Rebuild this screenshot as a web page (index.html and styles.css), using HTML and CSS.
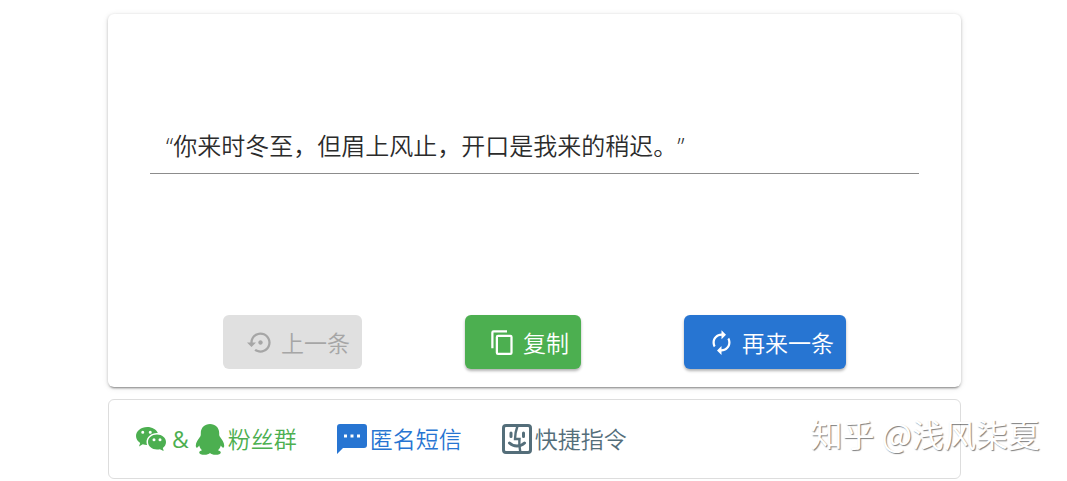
FILE: index.html
```html
<!DOCTYPE html>
<html lang="zh-CN">
<head>
<meta charset="utf-8">
<meta name="viewport" content="width=device-width, initial-scale=1">
<title>一言</title>
<link rel="stylesheet" href="styles.css">
</head>
<body>
<main class="page">
  <section class="card">
    <div class="field">
      <input class="quote" type="text" readonly aria-label="句子" value="“你来时冬至，但眉上风止，开口是我来的稍迟。”">
    </div>
    <div class="actions">
      <button class="btn btn-disabled" type="button" disabled>
        <svg class="btn-icon" viewBox="0 0 24 24" aria-hidden="true"><path d="M14 12c0-1.1-.9-2-2-2s-2 .9-2 2 .9 2 2 2 2-.9 2-2zm-2-9c-4.97 0-9 4.03-9 9H0l4 4 4-4H5c0-3.87 3.13-7 7-7s7 3.13 7 7-3.13 7-7 7c-1.51 0-2.91-.49-4.06-1.3l-1.42 1.44C8.04 20.3 9.94 21 12 21c4.97 0 9-4.03 9-9s-4.03-9-9-9z"/></svg>
        <span>上一条</span>
      </button>
      <button class="btn btn-green" type="button">
        <svg class="btn-icon" viewBox="0 0 24 24" aria-hidden="true"><path d="M19 21H8V7h11m0-2H8a2 2 0 0 0-2 2v14a2 2 0 0 0 2 2h11a2 2 0 0 0 2-2V7a2 2 0 0 0-2-2m-3-4H4a2 2 0 0 0-2 2v14h2V3h12V1z"/></svg>
        <span>复制</span>
      </button>
      <button class="btn btn-blue" type="button">
        <svg class="btn-icon" viewBox="0 0 24 24" aria-hidden="true"><path d="M12 6v3l4-4-4-4v3c-4.42 0-8 3.58-8 8 0 1.57.46 3.03 1.24 4.26L6.7 14.8c-.45-.83-.7-1.79-.7-2.8 0-3.31 2.69-6 6-6zm6.76 1.74L17.3 9.2c.44.84.7 1.79.7 2.8 0 3.31-2.69 6-6 6v-3l-4 4 4 4v-3c4.42 0 8-3.58 8-8 0-1.57-.46-3.03-1.24-4.26z"/></svg>
        <span>再来一条</span>
      </button>
    </div>
  </section>
  <nav class="links">
    <a class="link link-green" href="#group">
      <svg class="link-icon" viewBox="0 0 24 24" aria-hidden="true"><path d="M9.5 4C5.36 4 2 6.69 2 10c0 1.89 1.08 3.56 2.78 4.66L4 17l2.5-1.5c.89.31 1.87.5 2.91.5A5.22 5.22 0 0 1 9 14c0-3.31 3.13-6 7-6 .19 0 .38 0 .56.03C15.54 5.69 12.78 4 9.5 4m-3 2.5a1 1 0 1 1 0 2 1 1 0 0 1 0-2m5 0a1 1 0 1 1 0 2 1 1 0 0 1 0-2M16 9c-3.31 0-6 2.24-6 5s2.69 5 6 5c.67 0 1.31-.08 1.91-.25L20.5 20l-.62-2C21.17 17.1 22 15.65 22 14c0-2.76-2.69-5-6-5m-2 2.5a1 1 0 1 1 0 2 1 1 0 0 1 0-2m4 0a1 1 0 1 1 0 2 1 1 0 0 1 0-2z" transform="translate(-2.4 -2.4) scale(1.2)"/></svg>
      <span class="amp">&amp;</span>
      <svg class="link-icon" viewBox="0 0 30 32" aria-hidden="true"><path d="M15 1C9.7 1 5.8 4.8 5.8 10c0 1.300.1 2.200-.4 3.200C3 16.500.8 19.500.8 22.500c0 1.500.5 2.200 1 2.200.8 0 1.700-1.300 2.400-2.300.6 2 1.500 3.500 2.800 4.800-1.700.5-2.800 1.300-2.800 2.300 0 1.500 2.300 2.300 5.300 2.300 2.400 0 4.500-.7 5.500-1.800 1 1.100 3.100 1.800 5.500 1.800 3 0 5.300-.8 5.300-2.300 0-1-1.100-1.800-2.800-2.300 1.300-1.300 2.200-2.800 2.800-4.800.7 1 1.600 2.300 2.400 2.300.5 0 1-.7 1-2.200 0-3-2.200-6-4.600-9.300-.5-1-.4-1.900-.4-3.200C24.200 4.800 20.300 1 15 1z"/></svg>
      <span>粉丝群</span>
    </a>
    <a class="link link-blue" href="#message">
      <svg class="link-icon" viewBox="0 0 30 30" aria-hidden="true"><path fill-rule="evenodd" d="M3 0h24a3 3 0 0 1 3 3v18a3 3 0 0 1-3 3H6l-6 6V3a3 3 0 0 1 3-3zm4 10.500v3h3v-3zm6.500 0v3h3v-3zm6.500 0v3h3v-3z"/></svg>
      <span>匿名短信</span>
    </a>
    <a class="link link-slate" href="#shortcut">
      <svg class="link-icon" viewBox="0 0 30 30" aria-hidden="true"><g fill="none" stroke="currentColor" stroke-width="3"><rect x="1.500" y="1.500" width="27" height="27" rx="2.500"/><path stroke-width="2.400" d="M15.500 2c-1.500 4-2.500 8-2.500 13h4.500c-.5 4 0 8 .8 13"/><path d="M7.500 19c4 4 11 4 15 0M9 9v3.500M21.500 9v3.500" stroke-linecap="round"/></g></svg>
      <span>快捷指令</span>
    </a>
  </nav>
</main>
<div class="watermark">知乎 @浅风柒夏</div>
</body>
</html>
```
FILE: styles.css
```css
* { box-sizing: border-box; }

body {
  margin: 0;
  background: #fff;
  font-family: "Open Sans", "Noto Sans CJK SC", sans-serif;
}

.page {
  display: flex;
  flex-direction: column;
  gap: 12px;
  padding: 14px 106px 0 108px;
}

.card {
  padding: 108px 12px 18px;
  border-radius: 6px;
  box-shadow: 0 3px 2px -2px rgba(0, 0, 0, .3), 0 1px 3px rgba(0, 0, 0, .2), 0 1px 6px rgba(0, 0, 0, .1);
}

.field {
  margin: 0 30px 141px;
  border-bottom: 1px solid #8c8c8c;
}

.quote {
  display: block;
  width: 100%;
  height: 51px;
  padding: 0 16px 6px;
  border: 0;
  outline: 0;
  background: transparent;
  color: #2b2b2b;
  font-family: "Open Sans", "Noto Sans CJK SC", sans-serif;
  font-size: 24px;
  font-weight: 350;
  text-spacing-trim: space-all;
}

.actions {
  display: flex;
  justify-content: space-evenly;
}

.btn {
  display: flex;
  align-items: center;
  gap: 7px;
  height: 54px;
  padding: 0 12px 0 24px;
  border: 0;
  border-radius: 6px;
  color: #fff;
  font-family: "Noto Sans CJK SC", sans-serif;
  font-size: 23px;
  font-weight: 350;
  box-shadow: 0 2px 3px rgba(0, 0, 0, .3);
}

.btn-icon {
  width: 27px;
  height: 27px;
  fill: currentColor;
}

.btn-disabled {
  background: #e0e0e0;
  color: #a6a6a6;
  box-shadow: none;
}

.btn-green { background: #4caf50; }
.btn-blue { background: #2775d2; }

.links {
  display: flex;
  align-items: center;
  flex-wrap: wrap;
  gap: 40px;
  min-height: 80px;
  padding: 0 27px;
  border: 1px solid #ddd;
  border-radius: 6px;
}

.link {
  display: flex;
  align-items: center;
  gap: 3px;
  font-size: 23px;
  line-height: 32px;
  font-weight: 350;
  text-decoration: none;
}

.amp {
  padding: 0 3px;
  font-weight: 400;
}

.link-icon {
  width: 30px;
  height: 32px;
  fill: currentColor;
}

.link-green { color: #4caf50; }
.link-blue { color: #2775d2; }
.link-slate { color: #546e7a; }

.watermark {
  position: absolute;
  right: 27px;
  bottom: 24px;
  color: #fff;
  font-family: "Noto Sans CJK SC", sans-serif;
  font-size: 32px;
  line-height: 48px;
  text-shadow: 1px 1px 1px rgba(0, 0, 0, .5);
}
```
